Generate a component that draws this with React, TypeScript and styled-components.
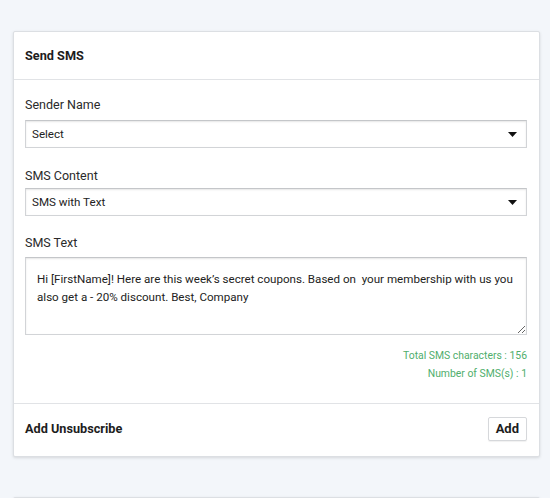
import styled, { createGlobalStyle } from "styled-components";

const GlobalStyle = createGlobalStyle`
  body {
    margin: 0;
    background: #f3f6fa;
    font-family: Roboto, "Liberation Sans", Arial, sans-serif;
    color: #222;
  }
`;

const Page = styled.div`
  padding: 31px 10px 0 13px;
  height: 498px;
  box-sizing: border-box;
  overflow: hidden;
`;

const Card = styled.div`
  width: 527px;
  box-sizing: border-box;
  background: #fff;
  border: 1px solid #dcdfe3;
  box-shadow: 0 1px 3px rgba(0, 0, 0, 0.12);
  border-radius: 2px;
`;

const NextCard = styled(Card)`
  margin-top: 40px;
  height: 40px;
`;

const Header = styled.div`
  height: 47px;
  display: flex;
  align-items: center;
  padding: 0 11px;
  border-bottom: 1px solid #e1e3e6;
`;

const Title = styled.h3`
  margin: 0;
  font-size: 12.7px;
  font-weight: 700;
  color: #1d1d1d;
`;

const Body = styled.div`
  padding: 17px 12px 20px 11px;
  display: flex;
  flex-direction: column;
`;

const Field = styled.div<{ $gap?: number }>`
  display: flex;
  flex-direction: column;
  margin-top: ${(p) => p.$gap ?? 0}px;
`;

const Label = styled.label<{ $space: number }>`
  font-size: 12.5px;
  line-height: 16px;
  color: #2a2a2a;
  margin-bottom: ${(p) => p.$space}px;
`;

const SelectBox = styled.div`
  height: 28px;
  box-sizing: border-box;
  border: 1px solid #d2d4d7;
  border-top-color: #c4c6c9;
  box-shadow: inset 0 1px 2px rgba(0, 0, 0, 0.1);
  display: flex;
  align-items: center;
  justify-content: space-between;
  padding: 0 9px 0 6px;
  font-size: 11.6px;
  color: #222;
`;

const Arrow = styled.svg`
  width: 9px;
  height: 5px;
`;

const TextArea = styled.textarea`
  height: 78px;
  box-sizing: border-box;
  border: 1px solid #d2d4d7;
  border-top-color: #c4c6c9;
  box-shadow: inset 0 1px 2px rgba(0, 0, 0, 0.1);
  padding: 12px 6px 0 11px;
  font-family: Roboto, "Liberation Sans", Arial, sans-serif;
  font-size: 11.6px;
  line-height: 18px;
  color: #222;
  resize: vertical;
  outline: none;
`;

const Stats = styled.div`
  margin-top: 12px;
  display: flex;
  flex-direction: column;
  align-items: flex-end;
  font-size: 10.4px;
  line-height: 18px;
  color: #4fae6c;
`;

const Footer = styled.div`
  height: 53px;
  box-sizing: border-box;
  padding: 0 12px 3px 11px;
  border-top: 1px solid #e1e3e6;
  display: flex;
  align-items: center;
  justify-content: space-between;
`;

const AddButton = styled.button`
  height: 24px;
  padding: 0 7px;
  background: #fff;
  border: 1px solid #d6d8db;
  border-radius: 2px;
  font-family: Roboto, "Liberation Sans", Arial, sans-serif;
  font-size: 13px;
  font-weight: 700;
  color: #1d1d1d;
  box-shadow: 0 1px 1px rgba(0, 0, 0, 0.06);
`;

const Caret = () => (
  <Arrow viewBox="0 0 9 5">
    <polygon points="0,0 9,0 4.5,5" fill="#111" />
  </Arrow>
);

export default function App() {
  return (
    <>
      <GlobalStyle />
      <Page>
        <Card>
          <Header>
            <Title>Send SMS</Title>
          </Header>
          <Body>
            <Field>
              <Label $space={7}>Sender Name</Label>
              <SelectBox>
                Select
                <Caret />
              </SelectBox>
            </Field>
            <Field $gap={20}>
              <Label $space={4}>SMS Content</Label>
              <SelectBox>
                SMS with Text
                <Caret />
              </SelectBox>
            </Field>
            <Field $gap={19}>
              <Label $space={6}>SMS Text</Label>
              <TextArea
                defaultValue={
                  "Hi [FirstName]! Here are this week\u2019s secret coupons. Based on  your membership with us you also get a - 20% discount. Best, Company"
                }
              />
            </Field>
            <Stats>
              <span>Total SMS characters : 156</span>
              <span>Number of SMS(s) : 1</span>
            </Stats>
          </Body>
          <Footer>
            <Title>Add Unsubscribe</Title>
            <AddButton>Add</AddButton>
          </Footer>
        </Card>
        <NextCard />
      </Page>
    </>
  );
}
